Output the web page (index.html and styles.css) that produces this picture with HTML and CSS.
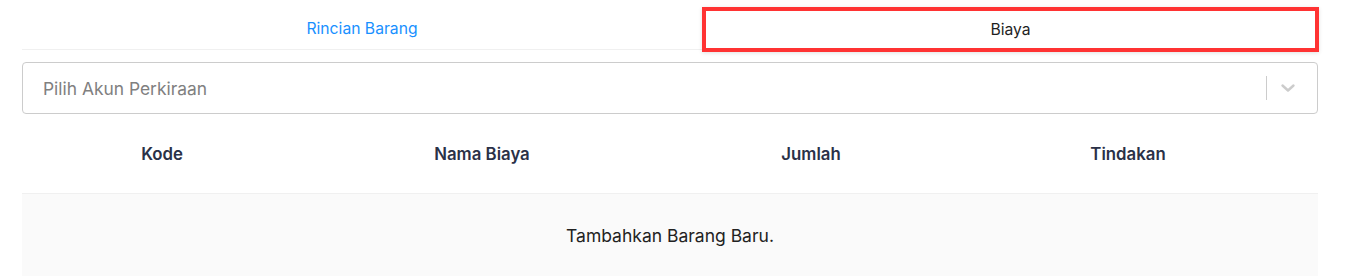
FILE: index.html
```html
<!DOCTYPE html>
<html lang="id">
<head>
  <meta charset="UTF-8" />
  <meta name="viewport" content="width=device-width, initial-scale=1.0"/>
  <title>Biaya</title>
  <link rel="stylesheet" href="styles.css">
</head>
<body>

  <div class="wrap">
    <div class="tabs">
      <div class="tab tab-left">Rincian Barang</div>
      <div class="tab tab-active">Biaya</div>
    </div>

    <div class="select">
      <span class="placeholder">Pilih Akun Perkiraan</span>
      <span class="sep"></span>
      <svg class="chevron" width="20" height="20" viewBox="0 0 20 20">
        <path d="M4.5 7.5 L10 12.5 L15.5 7.5" fill="none" stroke="#cccccc" stroke-width="2.4" stroke-linecap="round" stroke-linejoin="round"/>
      </svg>
    </div>

    <div class="table">
      <div class="thead">
        <div class="th">Kode</div>
        <div class="th">Nama Biaya</div>
        <div class="th">Jumlah</div>
        <div class="th th-last">Tindakan</div>
      </div>
      <div class="empty">Tambahkan Barang Baru.</div>
    </div>
  </div>

</body>
</html>
```

FILE: styles.css
```css
body {
  margin: 0;
  font-family: Inter, 'Noto Sans', sans-serif;
  background-color: #fff;
  color: #222;
}

.wrap {
  width: 1296px;
  margin-left: 22px;
  padding-top: 7px;
}

.tabs {
  display: flex;
  height: 45px;
}

.tab {
  display: flex;
  align-items: center;
  justify-content: center;
  font-size: 15.7px;
}

.tab-left {
  width: 680px;
  height: 42px;
  color: #1890ff;
  border-bottom: 1px solid #f0f0f0;
}

.tab-active {
  flex: 1;
  margin-right: -1px;
  border: 4px solid #ff3333;
  color: #1f1f1f;
  box-shadow: 0 1px 4px rgba(0, 0, 0, 0.12);
}

.select {
  display: flex;
  align-items: center;
  height: 50px;
  margin-top: 10px;
  border: 1px solid #cccccc;
  border-radius: 4px;
}

.placeholder {
  flex: 1;
  padding-left: 20px;
  font-size: 17.4px;
  color: #808080;
}

.sep {
  width: 1px;
  height: 24px;
  background-color: #cccccc;
}

.chevron {
  margin: 0 19px 0 11px;
}

.thead {
  display: grid;
  grid-template-columns: 280px 360px 298px 1fr;
  height: 79px;
  align-items: center;
  border-bottom: 1px solid #f0f0f0;
}

.th {
  text-align: center;
  font-size: 16.8px;
  font-weight: 600;
  color: #2a3147;
}

.th-last {
  padding-right: 22px;
}

.empty {
  background-color: #fafafa;
  height: 82px;
  display: flex;
  align-items: center;
  justify-content: center;
  font-size: 17.5px;
  color: #222;
}
```
